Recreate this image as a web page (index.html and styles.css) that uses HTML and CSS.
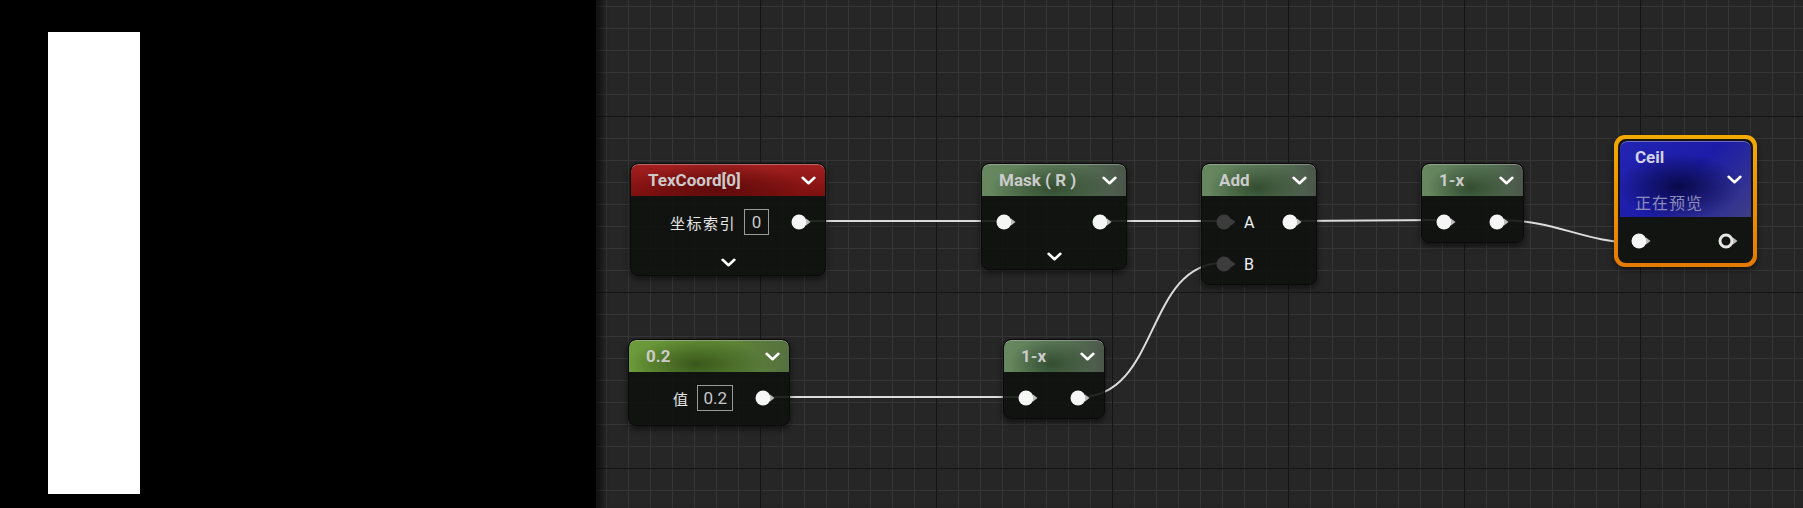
FILE: index.html
```html
<!DOCTYPE html>
<html lang="zh">
<head>
<meta charset="utf-8">
<title>Material Graph</title>
<link rel="stylesheet" href="styles.css">
</head>
<body>
<div class="app">
  <div class="preview"><div class="swatch"></div></div>
  <div class="graph">
    <svg class="wires" width="1207" height="508" viewBox="0 0 1207 508">
      <path d="M204 221 L407 221"/>
      <path d="M508 221 L627 221"/>
      <path d="M697 221 L847 220"/>
      <path d="M902 220 C964 220 985 243 1045 243"/>
      <path d="M168 397 L429 397"/>
      <path d="M484 397 C564 397 549 263 627 263"/>
    </svg>

    <div class="node n-texcoord">
      <div class="head red"><span class="title">TexCoord[0]</span><svg class="chev" viewBox="0 0 14 8"><path d="M1.5 1.5 L7 6.5 L12.5 1.5"/></svg></div>
      <div class="body">
        <div class="row">
          <div class="param"><span class="label">坐标索引</span><span class="num">0</span></div>
          <svg class="pin" viewBox="0 0 20 16"><circle cx="8" cy="8" r="7.5"/><path d="M15 4.5 L19.5 8 L15 11.5Z"/></svg>
        </div>
        <div class="expander tall"><svg class="chev" viewBox="0 0 14 8"><path d="M1.5 1.5 L7 6.5 L12.5 1.5"/></svg></div>
      </div>
    </div>

    <div class="node n-mask">
      <div class="head green"><span class="title">Mask ( R )</span><svg class="chev" viewBox="0 0 14 8"><path d="M1.5 1.5 L7 6.5 L12.5 1.5"/></svg></div>
      <div class="body">
        <div class="row">
          <svg class="pin" viewBox="0 0 20 16"><circle cx="8" cy="8" r="7.5"/><path d="M15 4.5 L19.5 8 L15 11.5Z"/></svg>
          <svg class="pin" viewBox="0 0 20 16"><circle cx="8" cy="8" r="7.5"/><path d="M15 4.5 L19.5 8 L15 11.5Z"/></svg>
        </div>
        <div class="expander"><svg class="chev" viewBox="0 0 14 8"><path d="M1.5 1.5 L7 6.5 L12.5 1.5"/></svg></div>
      </div>
    </div>

    <div class="node n-add">
      <div class="head green"><span class="title">Add</span><svg class="chev" viewBox="0 0 14 8"><path d="M1.5 1.5 L7 6.5 L12.5 1.5"/></svg></div>
      <div class="body">
        <div class="row">
          <div class="inpin"><svg class="pin dim" viewBox="0 0 20 16"><circle cx="8" cy="8" r="7.5"/><path d="M15 4.5 L19.5 8 L15 11.5Z"/></svg><span class="pinlabel">A</span></div>
          <svg class="pin" viewBox="0 0 20 16"><circle cx="8" cy="8" r="7.5"/><path d="M15 4.5 L19.5 8 L15 11.5Z"/></svg>
        </div>
        <div class="row second">
          <div class="inpin"><svg class="pin dim" viewBox="0 0 20 16"><circle cx="8" cy="8" r="7.5"/><path d="M15 4.5 L19.5 8 L15 11.5Z"/></svg><span class="pinlabel">B</span></div>
        </div>
      </div>
    </div>

    <div class="node n-onex-top">
      <div class="head green"><span class="title">1-x</span><svg class="chev" viewBox="0 0 14 8"><path d="M1.5 1.5 L7 6.5 L12.5 1.5"/></svg></div>
      <div class="body">
        <div class="row">
          <svg class="pin" viewBox="0 0 20 16"><circle cx="8" cy="8" r="7.5"/><path d="M15 4.5 L19.5 8 L15 11.5Z"/></svg>
          <svg class="pin" viewBox="0 0 20 16"><circle cx="8" cy="8" r="7.5"/><path d="M15 4.5 L19.5 8 L15 11.5Z"/></svg>
        </div>
      </div>
    </div>

    <div class="selected">
      <div class="node n-ceil">
        <div class="head blue">
          <span class="title">Ceil</span>
          <svg class="chev" viewBox="0 0 14 8"><path d="M1.5 1.5 L7 6.5 L12.5 1.5"/></svg>
          <span class="subtitle">正在预览</span>
        </div>
        <div class="body">
          <div class="row">
            <svg class="pin" viewBox="0 0 20 16"><circle cx="8" cy="8" r="7.5"/><path d="M15 4.5 L19.5 8 L15 11.5Z"/></svg>
            <svg class="pin ring" viewBox="0 0 20 16"><circle cx="8" cy="8" r="6"/><path d="M15 4.5 L19.5 8 L15 11.5Z"/></svg>
          </div>
        </div>
      </div>
    </div>

    <div class="node n-const">
      <div class="head olive"><span class="title">0.2</span><svg class="chev" viewBox="0 0 14 8"><path d="M1.5 1.5 L7 6.5 L12.5 1.5"/></svg></div>
      <div class="body">
        <div class="row">
          <div class="param"><span class="label">值</span><span class="num wide">0.2</span></div>
          <svg class="pin" viewBox="0 0 20 16"><circle cx="8" cy="8" r="7.5"/><path d="M15 4.5 L19.5 8 L15 11.5Z"/></svg>
        </div>
      </div>
    </div>

    <div class="node n-onex-bottom">
      <div class="head green"><span class="title">1-x</span><svg class="chev" viewBox="0 0 14 8"><path d="M1.5 1.5 L7 6.5 L12.5 1.5"/></svg></div>
      <div class="body">
        <div class="row">
          <svg class="pin" viewBox="0 0 20 16"><circle cx="8" cy="8" r="7.5"/><path d="M15 4.5 L19.5 8 L15 11.5Z"/></svg>
          <svg class="pin" viewBox="0 0 20 16"><circle cx="8" cy="8" r="7.5"/><path d="M15 4.5 L19.5 8 L15 11.5Z"/></svg>
        </div>
      </div>
    </div>
  </div>
</div>
</body>
</html>
```
FILE: styles.css
```css
* { box-sizing: border-box; }
html, body { margin: 0; padding: 0; background: #000; }
body { font-family: Roboto, "Noto Sans", "Noto Sans CJK SC", sans-serif; }

.app { display: flex; width: 1803px; height: 508px; overflow: hidden; }

.preview { width: 596px; height: 508px; background: #000; padding: 32px 0 0 48px; flex: none; }
.swatch { width: 92px; height: 462px; background: #fff; }

.graph {
  position: relative;
  flex: 1;
  height: 508px;
  overflow: hidden;
  background-color: #262626;
  background-image:
    linear-gradient(to right, #151515 1px, transparent 1px),
    linear-gradient(to bottom, #151515 1px, transparent 1px),
    linear-gradient(to right, #363636 1px, transparent 1px),
    linear-gradient(to bottom, #363636 1px, transparent 1px);
  background-size: 176px 100%, 100% 176px, 22px 100%, 100% 22px;
  background-position: 164px 0, 0 116px, 10px 0, 0 6px;
  box-shadow: inset 10px 0 6px -4px rgba(0, 0, 0, 0.55);
}

.wires { position: absolute; left: 0; top: 0; }
.wires path { fill: none; stroke: #dcdcdc; stroke-width: 2; }

/* nodes */
.node {
  position: absolute;
  display: flex;
  flex-direction: column;
  border-radius: 8px;
  border: 1px solid #0a0a0a;
  background: rgba(16, 18, 15, 0.9);
  box-shadow: 0 3px 6px rgba(0, 0, 0, 0.55);
  overflow: hidden;
}
.head {
  height: 32px;
  flex: none;
  display: flex;
  align-items: center;
  justify-content: space-between;
  padding: 0 9px 0 17px;
  box-shadow: inset 0 1px 0 rgba(200, 200, 200, 0.45);
  border-radius: 7px 7px 0 0;
}
.title {
  font-family: Roboto, sans-serif;
  font-weight: 700;
  font-size: 17px;
  color: #cbcbcb;
  letter-spacing: 0;
}
.chev { width: 15px; height: 9px; flex: none; }
.chev path { fill: none; stroke: #ffffff; stroke-width: 2.4; stroke-linecap: round; stroke-linejoin: round; }

.red {
  background:
    radial-gradient(ellipse 55% 90% at 45% 70%, rgba(45, 0, 0, 0.45), transparent 80%),
    linear-gradient(#a32020, #8c1515 60%, #7c1010);
}
.green {
  background:
    radial-gradient(ellipse 50% 95% at 48% 75%, rgba(25, 45, 22, 0.6), transparent 85%),
    linear-gradient(to right, #67885f, #5a7a58 55%, #4b564a);
}
.olive {
  background:
    radial-gradient(ellipse 50% 95% at 42% 75%, rgba(30, 50, 10, 0.6), transparent 85%),
    linear-gradient(to right, #6c9b3a, #5f8a34 55%, #56703f);
}
.blue {
  background:
    radial-gradient(ellipse 60% 55% at 45% 60%, rgba(5, 5, 50, 0.8), transparent 80%),
    linear-gradient(135deg, #2424b4, #1c1ca8 50%, #3e3e86);
}

.body { flex: 1; padding: 12px 14px 0; display: flex; flex-direction: column; }
.row { height: 28px; display: flex; align-items: center; justify-content: space-between; flex: none; }
.row.second { margin-top: 14px; }

.pin { width: 20px; height: 16px; flex: none; }
.pin circle { fill: #f6f6f6; }
.pin path { fill: #bdbdbd; }
.pin.dim circle, .pin.dim path { fill: #3c3c3c; }
.pin.ring circle { fill: #121212; stroke: #e6e6e6; stroke-width: 3; }

.param { display: flex; align-items: center; gap: 8px; margin-left: auto; margin-right: 22px; }
.label {
  font-family: "Noto Sans CJK SC", "Noto Sans", sans-serif;
  font-size: 15px;
  color: #e6e6e6;
  letter-spacing: 1.5px;
}
.num {
  height: 26px;
  min-width: 25px;
  padding: 0 5px;
  border: 1px solid #9a9a9a;
  display: flex;
  align-items: center;
  justify-content: center;
  font-family: Roboto, sans-serif;
  font-size: 17px;
  color: #c8c8c8;
}
.num.wide { padding: 0 5px; }

.inpin { display: flex; align-items: center; gap: 8px; }
.pinlabel { font-family: Roboto, sans-serif; font-size: 16px; color: #f2f2f2; }

.expander { height: 20px; display: flex; align-items: center; justify-content: center; margin-top: 10px; flex: none; }
.expander.tall { margin-top: 16px; }

/* placement on the canvas */
.n-texcoord { left: 34px; top: 163px; width: 196px; height: 113px; }
.n-mask { left: 385px; top: 163px; width: 146px; height: 107px; }
.n-add { left: 605px; top: 163px; width: 116px; height: 122px; }
.n-onex-top { left: 825px; top: 163px; width: 103px; height: 80px; }
.n-const { left: 32px; top: 339px; width: 162px; height: 87px; }
.n-onex-bottom { left: 407px; top: 339px; width: 102px; height: 80px; }

.selected {
  position: absolute;
  left: 1018px;
  top: 135px;
  padding: 4px;
  border-radius: 11px;
  background: linear-gradient(#f3aa00, #e47a00);
  box-shadow: 0 3px 6px rgba(0, 0, 0, 0.5);
}
.selected .node {
  position: relative;
  border: 2px solid #141414;
  box-shadow: none;
  background: #121411;
}
.n-ceil { width: 135px; height: 124px; }
.n-ceil .head {
  height: 76px;
  display: grid;
  grid-template-columns: 1fr auto;
  grid-template-rows: 24px 20px 26px;
  align-items: center;
  padding: 4px 9px 0 15px;
}
.n-ceil .title { grid-column: 1; grid-row: 1; color: #d4d4e2; }
.n-ceil .chev { grid-column: 2; grid-row: 2; }
.n-ceil .subtitle {
  grid-column: 1 / 3; grid-row: 3;
  font-family: "Noto Sans CJK SC", sans-serif;
  font-size: 16px;
  color: #8c8cbc;
  letter-spacing: 1px;
}
.n-ceil .body { padding: 10px 13px 0 11px; }
```
